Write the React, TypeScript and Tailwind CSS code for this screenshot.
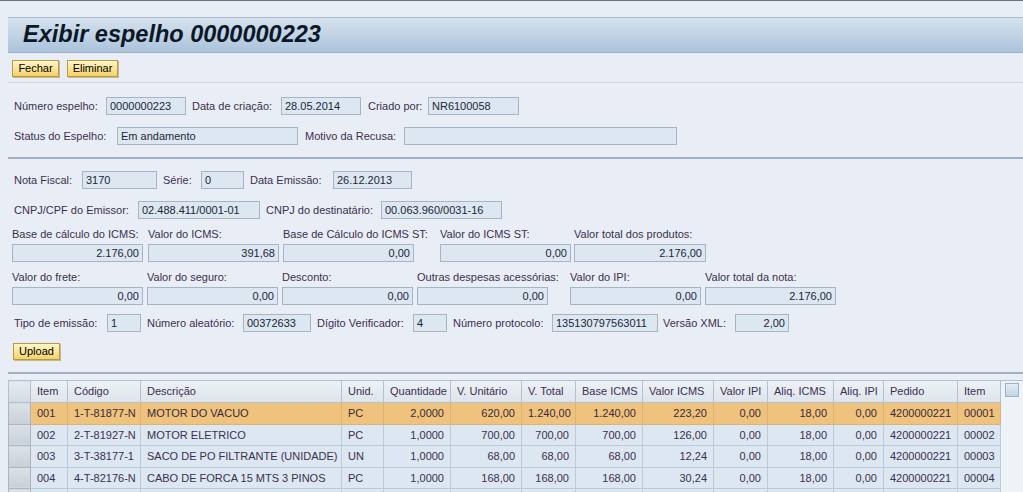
import React from 'react';
import clsx from 'clsx';

const font = { fontFamily: '"Liberation Sans", Arial, sans-serif' };

const Box = ({ className, right, children }: { className?: string; right?: boolean; children?: React.ReactNode }) => (
  <div
    className={clsx(
      'h-[18px] shrink-0 border border-[#a6b4c3] bg-[#dce7f2] px-[3px] text-[11px] leading-[16px] text-[#1d2634] whitespace-nowrap overflow-hidden',
      right && 'text-right',
      className
    )}
  >
    {children}
  </div>
);

const Lbl = ({ className, children }: { className?: string; children: React.ReactNode }) => (
  <span className={clsx('shrink-0 whitespace-nowrap text-[11px] leading-[14px] text-[#3b2f4f]', className)}>{children}</span>
);

const Btn = ({ className, children }: { className?: string; children: React.ReactNode }) => (
  <button
    className={clsx(
      'block h-[17px] border border-[#b79a45] bg-gradient-to-b from-[#fff7c9] to-[#f4d266] text-[11px] leading-[15px] text-black shadow-[1px_1px_0_#c9b98a]',
      className
    )}
  >
    {children}
  </button>
);

const cols = [
  { h: 'Item', a: 'l' },
  { h: 'Código', a: 'l' },
  { h: 'Descrição', a: 'l' },
  { h: 'Unid.', a: 'l' },
  { h: 'Quantidade', a: 'r' },
  { h: 'V. Unitário', a: 'r' },
  { h: 'V. Total', a: 'r' },
  { h: 'Base ICMS', a: 'r' },
  { h: 'Valor ICMS', a: 'r' },
  { h: 'Valor IPI', a: 'r' },
  { h: 'Aliq. ICMS', a: 'r' },
  { h: 'Aliq. IPI', a: 'r' },
  { h: 'Pedido', a: 'l' },
  { h: 'Item', a: 'l' },
];

const rows = [
  ['001', '1-T-81877-N', 'MOTOR DO VACUO', 'PC', '2,0000', '620,00', '1.240,00', '1.240,00', '223,20', '0,00', '18,00', '0,00', '4200000221', '00001'],
  ['002', '2-T-81927-N', 'MOTOR ELETRICO', 'PC', '1,0000', '700,00', '700,00', '700,00', '126,00', '0,00', '18,00', '0,00', '4200000221', '00002'],
  ['003', '3-T-38177-1', 'SACO DE PO FILTRANTE (UNIDADE)', 'UN', '1,0000', '68,00', '68,00', '68,00', '12,24', '0,00', '18,00', '0,00', '4200000221', '00003'],
  ['004', '4-T-82176-N', 'CABO DE FORCA 15 MTS 3 PINOS', 'PC', '1,0000', '168,00', '168,00', '168,00', '30,24', '0,00', '18,00', '0,00', '4200000221', '00004'],
  ['', '', '', '', '', '', '', '', '', '', '', '', '', ''],
];

export default function App() {
  return (
    <div className="h-[492px] w-full overflow-hidden bg-[#e9eef6]" style={font}>
      <div className="h-px bg-[#6b7671]" />

      {/* title bar */}
      <div className="ml-[8px] mt-[16px] flex h-[36px] items-center border-y border-t-[#a7b9cf] border-b-[#a3b2c9] bg-gradient-to-b from-[#d6e2ee] to-[#abc3dc] pl-[15px]">
        <h1 className="text-[23.5px] font-bold italic leading-none text-[#0c1826]">Exibir espelho 0000000223</h1>
      </div>

      <div className="mt-[7px] flex gap-[8px] pl-[12px]">
        <Btn className="w-[47px]">Fechar</Btn>
        <Btn className="w-[51px]">Eliminar</Btn>
      </div>

      <div className="ml-[8px] mt-[5px] h-[2px] border-t border-[#cbd4de] bg-[#f1f4f8]" />

      {/* header data */}
      <div className="mt-[13px] flex h-[18px] items-center pl-[14px]">
        <Lbl className="w-[92px]">Número espelho:</Lbl>
        <Box className="w-[80px]">0000000223</Box>
        <Lbl className="ml-[6px] w-[89px]">Data de criação:</Lbl>
        <Box className="w-[80px]">28.05.2014</Box>
        <Lbl className="ml-[7px] w-[60px]">Criado por:</Lbl>
        <Box className="w-[91px]">NR6100058</Box>
      </div>
      <div className="mt-[12px] flex h-[18px] items-center pl-[14px]">
        <Lbl className="w-[103px]">Status do Espelho:</Lbl>
        <Box className="w-[181px]">Em andamento</Box>
        <Lbl className="ml-[7px] w-[99px]">Motivo da Recusa:</Lbl>
        <Box className="w-[273px]" />
      </div>

      <div className="ml-[8px] mt-[12px] h-[2px] bg-[#9fb0c2]" />

      {/* nota fiscal */}
      <div className="mt-[12px] flex h-[18px] items-center pl-[14px]">
        <Lbl className="w-[68px]">Nota Fiscal:</Lbl>
        <Box className="w-[75px]">3170</Box>
        <Lbl className="ml-[6px] w-[38px]">Série:</Lbl>
        <Box className="w-[43px]">0</Box>
        <Lbl className="ml-[6px] w-[83px]">Data Emissão:</Lbl>
        <Box className="w-[79px]">26.12.2013</Box>
      </div>
      <div className="mt-[12px] flex h-[18px] items-center pl-[14px]">
        <Lbl className="w-[124px]">CNPJ/CPF do Emissor:</Lbl>
        <Box className="w-[122px]">02.488.411/0001-01</Box>
        <Lbl className="ml-[6px] w-[115px]">CNPJ do destinatário:</Lbl>
        <Box className="w-[121px]">00.063.960/0031-16</Box>
      </div>

      <div className="mt-[8px] flex pl-[12px]">
        <div className="flex w-[136px] shrink-0 flex-col gap-[3px]">
          <Lbl>Base de cálculo do ICMS:</Lbl>
          <Box right className="w-[131px]">2.176,00</Box>
        </div>
        <div className="flex w-[135px] shrink-0 flex-col gap-[3px]">
          <Lbl>Valor do ICMS:</Lbl>
          <Box right className="w-[131px]">391,68</Box>
        </div>
        <div className="flex w-[157px] shrink-0 flex-col gap-[3px]">
          <Lbl>Base de Cálculo do ICMS ST:</Lbl>
          <Box right className="w-[131px]">0,00</Box>
        </div>
        <div className="flex w-[134px] shrink-0 flex-col gap-[3px]">
          <Lbl>Valor do ICMS ST:</Lbl>
          <Box right className="w-[131px]">0,00</Box>
        </div>
        <div className="flex w-[140px] shrink-0 flex-col gap-[3px]">
          <Lbl>Valor total dos produtos:</Lbl>
          <Box right className="w-[132px]">2.176,00</Box>
        </div>
      </div>

      <div className="mt-[8px] flex pl-[12px]">
        <div className="flex w-[135px] shrink-0 flex-col gap-[3px]">
          <Lbl>Valor do frete:</Lbl>
          <Box right className="w-[131px]">0,00</Box>
        </div>
        <div className="flex w-[135px] shrink-0 flex-col gap-[3px]">
          <Lbl>Valor do seguro:</Lbl>
          <Box right className="w-[131px]">0,00</Box>
        </div>
        <div className="flex w-[135px] shrink-0 flex-col gap-[3px]">
          <Lbl>Desconto:</Lbl>
          <Box right className="w-[131px]">0,00</Box>
        </div>
        <div className="flex w-[153px] shrink-0 flex-col gap-[3px]">
          <Lbl>Outras despesas acessórias:</Lbl>
          <Box right className="w-[131px]">0,00</Box>
        </div>
        <div className="flex w-[135px] shrink-0 flex-col gap-[3px]">
          <Lbl>Valor do IPI:</Lbl>
          <Box right className="w-[131px]">0,00</Box>
        </div>
        <div className="flex w-[140px] shrink-0 flex-col gap-[3px]">
          <Lbl>Valor total da nota:</Lbl>
          <Box right className="w-[131px]">2.176,00</Box>
        </div>
      </div>

      <div className="mt-[9px] flex h-[18px] items-center pl-[14px]">
        <Lbl className="w-[93px]">Tipo de emissão:</Lbl>
        <Box className="w-[34px]">1</Box>
        <Lbl className="ml-[6px] w-[96px]">Número aleatório:</Lbl>
        <Box className="w-[68px]">00372633</Box>
        <Lbl className="ml-[6px] w-[96px]">Dígito Verificador:</Lbl>
        <Box className="w-[34px]">4</Box>
        <Lbl className="ml-[6px] w-[99px]">Número protocolo:</Lbl>
        <Box className="w-[106px]">135130797563011</Box>
        <Lbl className="ml-[5px] w-[72px]">Versão XML:</Lbl>
        <Box right className="w-[54px]">2,00</Box>
      </div>

      <div className="mt-[11px] flex pl-[13px]">
        <Btn className="w-[47px]">Upload</Btn>
      </div>

      <div className="ml-[8px] mt-[12px] h-[2px] bg-[#9fb0c2]" />

      {/* items table */}
      <div className="ml-[8px] mt-[6px] flex">
        <table className="w-[992px] table-fixed border-collapse text-[11px] text-[#3b2f4f]">
          <colgroup>
            <col className="w-[22px]" />
            <col className="w-[37px]" />
            <col className="w-[73px]" />
            <col className="w-[201px]" />
            <col className="w-[42px]" />
            <col className="w-[67px]" />
            <col className="w-[71px]" />
            <col className="w-[54px]" />
            <col className="w-[67px]" />
            <col className="w-[71px]" />
            <col className="w-[54px]" />
            <col className="w-[66px]" />
            <col className="w-[50px]" />
            <col className="w-[74px]" />
            <col className="w-[43px]" />
          </colgroup>
          <thead>
            <tr className="h-[22px] bg-gradient-to-b from-[#eef2f6] to-[#dce3eb]">
              <th className="border border-[#b3c1cf] bg-gradient-to-b from-[#e6ebf0] to-[#d4dbe3]" />
              {cols.map((c, i) => (
                <th key={i} className="border border-[#b3c1cf] px-[6px] text-left font-normal whitespace-nowrap">
                  {c.h}
                </th>
              ))}
            </tr>
          </thead>
          <tbody>
            {rows.map((r, ri) => (
              <tr key={ri} className={clsx('h-[21.5px]', ri === 0 ? 'bg-[#efc27d] text-[#3a2a3c]' : 'bg-[#dde7f1]')}>
                <td className="border border-[#a9b6c4] bg-gradient-to-b from-[#dde2e8] to-[#c8cfd8]" />
                {r.map((v, ci) => (
                  <td
                    key={ci}
                    className={clsx(
                      'overflow-hidden border border-[#bcc9d6] px-[6px] whitespace-nowrap',
                      ri === 0 && 'border-[#d9b477]',
                      cols[ci].a === 'r' ? 'text-right' : 'text-left'
                    )}
                  >
                    {v}
                  </td>
                ))}
              </tr>
            ))}
          </tbody>
        </table>
        <div className="w-[23px] border-t border-[#b3c1cf] bg-[#eef3f8] pl-[4px] pt-[2px]">
          <div className="h-[14px] w-[14px] border border-[#9fb1c4] bg-gradient-to-b from-[#e4ecf4] to-[#c3d3e4]" />
        </div>
      </div>
    </div>
  );
}
